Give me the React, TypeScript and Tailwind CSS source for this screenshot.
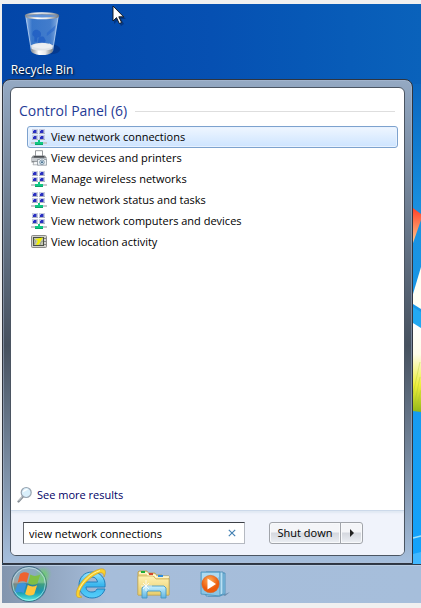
import type { ReactNode } from "react";

function NetworkIcon() {
  const screens = [
    [1, 0],
    [8, 0],
    [1, 6],
    [8, 6],
  ];
  return (
    <svg viewBox="0 0 16 16" className="size-4 shrink-0" aria-hidden="true">
      {screens.map(([x, y]) => (
        <g key={`${x}-${y}`}>
          <rect x={x} y={y} width="6" height="5" fill="#c9cde0" />
          <rect x={x + 1} y={y + 1} width="4" height="3" fill="#2a2fc0" />
          <rect x={x + 1} y={y + 1} width="1" height="1" fill="#a3aef5" />
          <rect x={x + 4} y={y + 1} width="1" height="3" fill="#7f88cc" />
          <rect x={x} y={y + 4} width="6" height="1" fill="#aeb2c2" />
        </g>
      ))}
      <path d="M0 13h16v2H0z" fill="#c6c9cc" />
      <path d="M7 11h2v2h3v2H4v-2h3z" fill="#10c884" />
      <path d="M4 15h8v1H4z" fill="#0aa468" />
    </svg>
  );
}

function PrinterIcon() {
  return (
    <svg viewBox="0 0 16 16" className="size-4 shrink-0" aria-hidden="true">
      <path d="M4.5 6V.7h7V6" fill="#fff" stroke="#8a8d91" strokeWidth="0.9" />
      <path d="M2 5.5h12l1.5 2v5H.5v-5z" fill="#85898d" />
      <path d="M1 8h14v3H1z" fill="#c9ccd0" />
      <path d="M3 6h10v1.5H3z" fill="#4b4f53" />
      <path d="M3 11.5h5v3.3H2z" fill="#f4f6f8" stroke="#85898d" strokeWidth="0.6" />
      <path d="M6.5 9.5h2l.7-1.2h3.5l.7 1.2h2.2v5.7H6.5z" fill="#eef2f5" stroke="#7d8790" strokeWidth="0.7" />
      <circle cx="11" cy="12.2" r="2.3" fill="#d3e6f3" stroke="#5b7688" strokeWidth="0.7" />
      <circle cx="11" cy="12.2" r="0.9" fill="#2f5878" />
    </svg>
  );
}

function LocationIcon() {
  return (
    <svg viewBox="0 0 16 16" className="size-4 shrink-0" aria-hidden="true">
      <rect x="0.5" y="1.5" width="15" height="12" rx="1" fill="#d2d2cd" stroke="#8a8a88" />
      <rect x="2.5" y="3.5" width="10" height="8" fill="#c3c6b4" stroke="#4a4f42" />
      <path d="M3 11l1.5-4L3 5M9 11l1-3 2-1" stroke="#8f9680" strokeWidth="0.8" fill="none" />
      <path d="M11.8 3.600L4 5.200l3 1.600L4.800 11l3-.500z" fill="#f0f000" />
      <path d="M13.500 4h1v1h-1zM13.500 7h1v1h-1zM13.500 10h1v1h-1z" fill="#333" />
    </svg>
  );
}

function MagnifierIcon() {
  return (
    <svg viewBox="0 0 16 18" className="h-[18px] w-4 shrink-0" aria-hidden="true">
      <path d="M1.5 15.5L6 10.5" stroke="#858d94" strokeWidth="2.2" strokeLinecap="round" />
      <path d="M1.5 15L5.5 10.5" stroke="#d5dade" strokeWidth="0.8" />
      <circle cx="9.2" cy="6.5" r="5" fill="#d9effb" stroke="#9aa5b1" strokeWidth="1.2" />
      <path d="M5.8 6.5a3.5 3.5 0 0 1 5.5-2.8C9 4 7.5 5.5 5.8 6.5z" fill="#fff" />
    </svg>
  );
}

function RecycleBinIcon() {
  return (
    <svg viewBox="-1 1 50 50" className="size-12" aria-hidden="true">
      <defs>
        <linearGradient id="glass">
          <stop offset="0" stopColor="#d6e9ff" stopOpacity="0.7" />
          <stop offset="0.2" stopColor="#77aef0" stopOpacity="0.45" />
          <stop offset="0.75" stopColor="#8fbcf5" stopOpacity="0.45" />
          <stop offset="1" stopColor="#d0e6ff" stopOpacity="0.65" />
        </linearGradient>
        <linearGradient id="metal">
          <stop offset="0" stopColor="#81888f" />
          <stop offset="0.35" stopColor="#fff" />
          <stop offset="0.65" stopColor="#e7e8e9" />
          <stop offset="1" stopColor="#6f777e" />
        </linearGradient>
      </defs>
      <ellipse cx="34" cy="42" rx="9" ry="5" fill="#04296f" opacity="0.45" />
      <path d="M7 7l6 37c4 4 18 4 22 0l6-37z" fill="url(#glass)" />
      <path d="M7 7l6 37M41 7l-6 37" stroke="#c4dcf8" strokeWidth="0.8" />
      <path d="M14 27c0-5 3-6 6-5s4 5 2 7l-3 1v4h-3v-5zM20 33c0-4 3-5 6-4l2 4-2 3h-6z" fill="#1855c2" opacity="0.6" />
      <path d="M12.500 38c5-4 18-4 23 0l-1 5c-5 4-16 4-21 0z" fill="#dfe3e8" />
      <path d="M14 39c4-5 6-1 9-3s6 2 9 0l3 3c-5 3-14 3-21 0z" fill="#eceff2" />
      <path d="M12.5 41c5 3 18 3 23 0l-.7 4c-5 4-16 4-21.6 0z" fill="url(#metal)" />
      <path d="M29 25l9-8-1 5-8 6z" fill="#1f60c9" opacity="0.5" />
      <ellipse cx="24" cy="7" rx="17" ry="2.8" fill="#5f92d8" stroke="url(#metal)" strokeWidth="1.8" />
      <path d="M8 7.5c5-3 27-3 32 0" stroke="#8f9499" strokeWidth="0.8" fill="none" />
    </svg>
  );
}

function StartOrb() {
  return (
    <svg viewBox="0 0 46 38" className="h-[38px] w-[46px]" aria-hidden="true">
      <defs>
        <linearGradient id="orb" x2="0" y2="1">
          <stop offset="0" stopColor="#8faabf" />
          <stop offset="0.45" stopColor="#86a9bb" />
          <stop offset="0.5" stopColor="#2f7f98" />
          <stop offset="0.75" stopColor="#189fb4" />
          <stop offset="1" stopColor="#5ff0e0" />
        </linearGradient>
        <radialGradient id="glow">
          <stop offset="0" stopColor="#5fdf50" />
          <stop offset="1" stopColor="#5fdf50" stopOpacity="0" />
        </radialGradient>
        <radialGradient id="warm">
          <stop offset="0" stopColor="#ff9b5d" />
          <stop offset="1" stopColor="#ff9b5d" stopOpacity="0" />
        </radialGradient>
      </defs>
      <ellipse cx="38" cy="9" rx="8" ry="8" fill="url(#glow)" opacity="0.5" />
      <circle cx="23" cy="19" r="17.5" fill="url(#orb)" stroke="#3b6680" strokeWidth="0.9" />
      <ellipse cx="10" cy="20" rx="8" ry="10" fill="url(#warm)" opacity="0.4" />
      <ellipse cx="36" cy="14" rx="8" ry="12" fill="url(#glow)" opacity="0.6" />
      <path d="M14 9c3-2.2 6-2.2 9-.5l-2.300 9c-3-1.600-6-1.500-9 .300z" fill="#ee6230" />
      <path d="M24.300 9.500c3 1.900 6 2 10 0l-3 9.200c-3 1.600-6 1.300-9.200-.500z" fill="#7fbf45" />
      <path d="M11.300 19.500c3-2 6-2 9-.300l-2.700 9c-3-1.700-6-1.600-9.200.500z" fill="#3a94dc" />
      <path d="M21.800 20c3 1.800 6 2 9.300.200l-2.900 9.100c-3 1.800-6 1.600-9.100-.400z" fill="#ffc53b" />
      <circle cx="23" cy="19" r="16.300" fill="none" stroke="#d4f3f6" strokeOpacity="0.6" />
    </svg>
  );
}

function BrowserIcon() {
  return (
    <svg viewBox="0 0 32 32" className="size-8" aria-hidden="true">
      <defs>
        <linearGradient id="letter" x2="0" y2="1">
          <stop offset="0" stopColor="#9be9ff" />
          <stop offset="0.5" stopColor="#39b6ee" />
          <stop offset="1" stopColor="#57cffa" />
        </linearGradient>
      </defs>
      <path
        fillRule="evenodd"
        d="M17 4C9 4 4 10 4 17c0 8 6 13 13 13 6 0 11-3 13-9h-8c-1 2-2 3-5 3-4 0-6-2-6-5h19C31 10 25 4 17 4zm-6 10c.5-3 3-5 6-5s5 2 5.5 5z"
        fill="url(#letter)"
        stroke="#217fbc"
        strokeWidth="1"
      />
      <path
        d="M7 29c-5 2-7-1-5-7C5 13 16 3 25 1c5-1 7 2 4 8 0-4-2-5-5-4C16 8 7 17 5 23c-1 3-1 5 2 6z"
        fill="#fbd12d"
        stroke="#ca9c24"
        strokeWidth="0.6"
      />
      <path d="M4 22C7 14 16 5 25 2.6" stroke="#fff3a0" strokeWidth="1" fill="none" />
    </svg>
  );
}

function ExplorerIcon() {
  return (
    <svg viewBox="0 0 34 32" className="h-8 w-[34px]" aria-hidden="true">
      <defs>
        <linearGradient id="folder" x2="0" y2="1">
          <stop offset="0" stopColor="#fff2b4" />
          <stop offset="1" stopColor="#e8cd6c" />
        </linearGradient>
        <linearGradient id="stand" x2="0" y2="1">
          <stop offset="0" stopColor="#c9f2ff" />
          <stop offset="1" stopColor="#5fb3df" />
        </linearGradient>
      </defs>
      <path d="M2 27V4l1-1h8l1 2h7l1 2h6l1 1h6v19z" fill="#ecd688" stroke="#b99c48" strokeWidth="0.8" />
      <path d="M3 5h8l1 2h7l1 2h13" stroke="#fffbdc" strokeWidth="1.5" fill="none" />
      <path d="M5 3h4v2H5z" fill="#1bac37" />
      <path d="M13 5h4v2h-4z" fill="#d4452b" />
      <path d="M22 7h5v2h-5z" fill="#2a8de2" />
      <path d="M2 8h15l3 3h13v16H2z" fill="url(#folder)" stroke="#c8ac56" strokeWidth="0.7" />
      <path d="M6 30V20l2-2h20l2 2v10h-5v-6l-1-1H12l-1 1v6z" fill="url(#stand)" stroke="#4698c5" strokeWidth="0.9" />
      <path d="M10 12v11M5 18h11M7 15l6 6M13 15l-6 6" stroke="#fff" strokeWidth="0.8" />
    </svg>
  );
}

function MediaPlayerIcon() {
  return (
    <svg viewBox="0 0 32 30" className="h-[30px] w-8" aria-hidden="true">
      <defs>
        <radialGradient id="disc" cx="45%" cy="30%">
          <stop offset="0" stopColor="#ffae58" />
          <stop offset="1" stopColor="#ec5b0c" />
        </radialGradient>
      </defs>
      <path d="M24 26l7-3-5 4z" fill="#53779a" opacity="0.7" />
      <path d="M9 4h17v21l-5 2H9z" fill="#8cc7e8" stroke="#4389b4" strokeWidth="0.8" />
      <path d="M7 3h17v22l-5 2H7z" fill="#b7dff4" stroke="#4389b4" strokeWidth="0.8" />
      <path d="M2 3h19v24L2 25z" fill="#8bc5e5" stroke="#4590ba" strokeWidth="0.8" />
      <path d="M3 4h17v4L3 18z" fill="#c7e8f7" opacity="0.6" />
      <circle cx="11.5" cy="15" r="8.7" fill="url(#disc)" stroke="#cf632b" strokeWidth="0.5" />
      <path d="M8.5 9.5v11l8.5-5.5z" fill="#fff" />
    </svg>
  );
}

function Wallpaper() {
  return (
    <div className="absolute inset-0 overflow-hidden bg-linear-to-b from-[#0a60bb] from-10% via-[#1a92e0] via-35% to-[#12a5ff]">
      <div className="h-20 bg-linear-to-r from-[#0346a8] via-[#0650b2] to-[#0a62bb]" />
      <svg viewBox="0 0 8 360" className="absolute top-[200px] right-0 h-[360px] w-2" aria-hidden="true">
        <defs>
          <linearGradient id="red" x2="0" y2="1">
            <stop offset="0" stopColor="#ff4027" />
            <stop offset="1" stopColor="#ffc98c" />
          </linearGradient>
          <linearGradient id="lime" x2="0" y2="1">
            <stop offset="0" stopColor="#fff" />
            <stop offset="0.35" stopColor="#fffde9" />
            <stop offset="0.7" stopColor="#eeee3c" />
            <stop offset="1" stopColor="#94b817" />
          </linearGradient>
        </defs>
        <path d="M0 4l8 6v6L0 39z" fill="url(#red)" />
        <path d="M8 63v42l-8-5V90z" fill="#fffff4" />
        <path d="M0 103l8 5v16l-8-5z" fill="#22a9f2" />
        <path d="M0 119l8 5v84l-8-1z" fill="url(#lime)" />
        <path d="M1 203l6-30M3 206l5-20M0 190l7-32" stroke="#a9c42b" strokeWidth="0.6" opacity="0.6" />
        <path d="M0 334l8-2" stroke="#9ce3ff" strokeWidth="1.5" />
        <path d="M0 350l8-2v12H0z" fill="#42b8ff" />
      </svg>
    </div>
  );
}

const results: { label: string; icon: ReactNode }[] = [
  { label: "View network connections", icon: <NetworkIcon /> },
  { label: "View devices and printers", icon: <PrinterIcon /> },
  { label: "Manage wireless networks", icon: <NetworkIcon /> },
  { label: "View network status and tasks", icon: <NetworkIcon /> },
  { label: "View network computers and devices", icon: <NetworkIcon /> },
  { label: "View location activity", icon: <LocationIcon /> },
];

function SearchResults() {
  return (
    <section className="px-2 pt-[11px]">
      <div className="flex items-center gap-2 pr-px">
        <h2 className="text-[14px] leading-6 text-[#1f3b96]">Control Panel (6)</h2>
        <div className="h-px flex-1 bg-[#dedede]" />
      </div>
      <ul className="mt-[3px] -mr-0.5 ml-2 -space-y-px">
        {results.map(({ label, icon }, index) => (
          <li key={label}>
            <button
              type="button"
              className={`flex h-[22px] w-full items-center gap-1 rounded-[3px] border px-[3px] text-left ${
                index === 0
                  ? "border-[#7da2ce] bg-linear-to-b from-[#eff6ff] to-[#cde4ff] shadow-[inset_0_0_0_1px_#e8f2ff]"
                  : "border-transparent"
              }`}
            >
              {icon}
              {label}
            </button>
          </li>
        ))}
      </ul>
    </section>
  );
}

const silver =
  "border border-[#a1a4aa] bg-linear-to-b from-[#f4f5f8] from-45% via-[#d5d8df] via-50% to-[#eceff4] shadow-[inset_0_0_0_1px_#f8f9fb]";

function SearchFooter() {
  return (
    <footer className="flex items-center gap-6 border-t border-[#ccd9ea] bg-[#f0f3fb] px-3 py-[11px] shadow-[inset_0_2px_2px_#e0e8f3]">
      <div className="flex h-[22px] w-[222px] items-center border border-[#b5b9c1] border-t-[#3c3f45] border-l-[#66696f] bg-white pr-1.5">
        <input
          aria-label="Search programs and files"
          defaultValue="view network connections"
          className="h-full min-w-0 flex-1 bg-transparent pl-[5px] outline-none"
        />
        <button type="button" aria-label="Clear search" className="flex size-3 items-center justify-center">
          <svg viewBox="0 0 8 8" className="size-2" aria-hidden="true">
            <path d="M.8.8l6.4 6.4M7.2.8L.8 7.2" stroke="#4683b4" strokeWidth="1.2" />
          </svg>
        </button>
      </div>
      <div className="flex">
        <button type="button" className={`h-[22px] w-[72px] rounded-l-[3px] ${silver}`}>
          Shut down
        </button>
        <button
          type="button"
          aria-label="Shut down options"
          className={`-ml-px flex h-[22px] w-[23px] items-center justify-center rounded-r-[3px] ${silver}`}
        >
          <svg viewBox="0 0 4 8" className="h-2 w-1" aria-hidden="true">
            <path d="M0 0l4 4-4 4z" fill="#222" />
          </svg>
        </button>
      </div>
    </footer>
  );
}

function StartMenu() {
  return (
    <div className="relative mr-2 rounded-t-lg border border-[#30353f] bg-linear-to-b from-[#94a9c3] via-[#46515f] via-55% to-[#a6bfdd] p-[7px] text-[11px] shadow-[inset_0_0_0_1px_#adbed580]">
      <div className="flex flex-col overflow-hidden rounded-[6px] border border-[#4b5562] bg-white">
        <SearchResults />
        <a href="#results" className="mt-[233px] mb-1.5 ml-1.5 flex items-center gap-1 text-[#000066]">
          <MagnifierIcon />
          See more results
        </a>
        <SearchFooter />
      </div>
    </div>
  );
}

function Taskbar() {
  return (
    <nav
      aria-label="Taskbar"
      className="relative flex h-[39px] items-center gap-[29px] border-t border-[#303b4b] bg-linear-to-r from-[#8295ae] via-[#a6bdda] via-25% to-[#a6bedb] pl-1 shadow-[inset_0_1px_0_#bbcde2]"
    >
      <button type="button" aria-label="Start">
        <StartOrb />
      </button>
      <button type="button" aria-label="Internet Explorer" className="-ml-1.5">
        <BrowserIcon />
      </button>
      <button type="button" aria-label="Windows Explorer">
        <ExplorerIcon />
      </button>
      <button type="button" aria-label="Windows Media Player">
        <MediaPlayerIcon />
      </button>
    </nav>
  );
}

export default function App() {
  return (
    <div className="min-h-screen bg-[#f0f0f0] pt-1 pb-1 pl-0.5 font-['Open_Sans','Noto_Sans',sans-serif] text-[12px] leading-4 text-black">
      <main className="relative">
        <Wallpaper />
        <button
          type="button"
          className="relative flex h-[75px] w-20 flex-col items-center gap-1 pt-1.5 text-white [text-shadow:1px_1px_2px_#000]"
        >
          <RecycleBinIcon />
          <span className="whitespace-nowrap">Recycle Bin</span>
        </button>
        <svg viewBox="0 0 14 21" className="absolute top-px left-[110px] h-[21px] w-3.5" aria-hidden="true">
          <path d="M2 3v16l4-4 3 6 3-2-3-5h5z" fill="#00215c" opacity="0.5" />
          <path d="M1 1v15l3.5-3.4L7.3 18.5l2.3-1-2.8-5.7h4.8z" fill="#fff" stroke="#111" strokeWidth="0.9" />
        </svg>
        <StartMenu />
        <Taskbar />
      </main>
    </div>
  );
}
